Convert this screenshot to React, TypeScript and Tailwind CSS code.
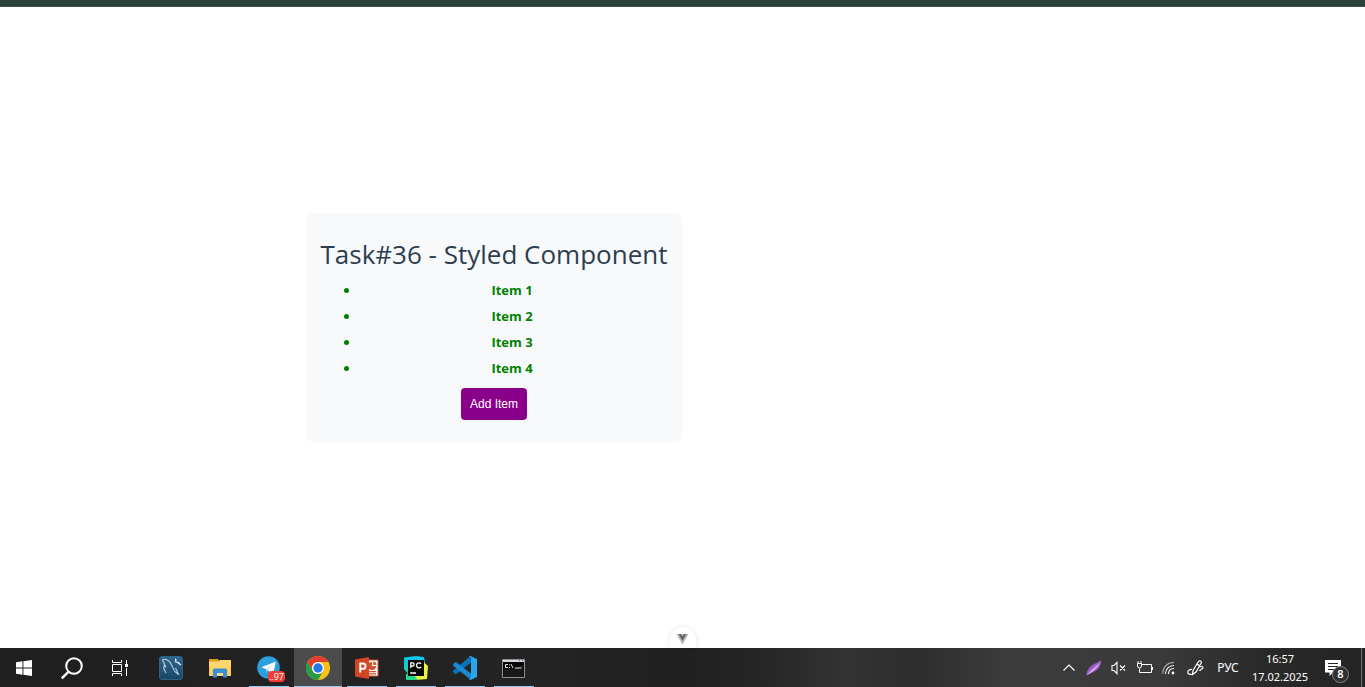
import { useState } from "react";
import type { ReactNode } from "react";

function StartIcon() {
  return (
    <svg width="16" height="16" viewBox="0 0 16 16" fill="#fff" aria-hidden="true">
      <path d="M0 2.2 6.5 1.3V7.5H0zM7.4 1.2 16 0v7.5H7.4zM0 8.4h6.5v6.3L0 13.8zM7.4 8.4H16V16l-8.6-1.2z" />
    </svg>
  );
}

function SearchIcon() {
  return (
    <svg width="24" height="24" viewBox="0 0 24 24" fill="none" stroke="#fff" aria-hidden="true">
      <circle cx="14" cy="10" r="7.8" strokeWidth="2" />
      <path d="M8.6 15.6 1.8 22.4" strokeWidth="2.4" />
    </svg>
  );
}

function TaskViewIcon() {
  return (
    <svg width="18" height="16" viewBox="0 0 18 16" fill="none" stroke="#fff" aria-hidden="true">
      <path d="M1.5 0v2.5h9V0M1.5 16v-2.5h9V16M1.5 4.5h9v7h-9zM15.500 0v4M15.500 8v8" />
      <path d="M14 4h3v3h-3z" fill="#fff" stroke="none" />
    </svg>
  );
}

function WorkbenchIcon() {
  return (
    <svg width="24" height="24" viewBox="0 0 24 24" fill="none" aria-hidden="true">
      <defs>
        <linearGradient id="wb" x1="0" y1="0" x2="0" y2="1">
          <stop offset="0" stopColor="#33658d" />
          <stop offset="1" stopColor="#174767" />
        </linearGradient>
      </defs>
      <rect x=".5" y=".5" width="23" height="23" rx="2.500" fill="url(#wb)" stroke="#2b6288" />
      <path
        d="M3.500 3.500c3.500-.8 6 .6 8 3.600 2 3 2.800 6.300 4.500 8.600l4 3M3.500 3.500l2 5-.8 4 2.300 4.500M5.500 8.500l1.500 3M16.500 12l3 6.500"
        stroke="#bcd0df"
        strokeWidth="1.100"
      />
      <path d="m16 2 1.500 1.500v2L19.500 6l3 2.800-1.200.8-3-2.600-2.300-.8z" fill="#dce7ef" />
    </svg>
  );
}

function ExplorerIcon() {
  return (
    <svg width="22" height="20" viewBox="0 0 22 20" aria-hidden="true">
      <path d="M0 1h9l1.500 2.500V7H0z" fill="#e09b11" />
      <path d="M0 3.500h9.500L11 2h11v16H0z" fill="#fdd76c" />
      <path d="M0 10h22v8H0z" fill="#f9cf5e" />
      <path d="M4 19.500V12a1.500 1.500 0 0 1 1.500-1.500h11A1.500 1.500 0 0 1 18 12v7.500h-4V15H8v4.500z" fill="#3a8fd8" />
      <path d="M8 15h6v3H8z" fill="#f3d88c" />
    </svg>
  );
}

function TelegramIcon() {
  return (
    <svg width="24" height="24" viewBox="0 0 24 24" aria-hidden="true">
      <circle cx="11.500" cy="11.500" r="11.300" fill="#2ba0da" />
      <path d="M4.500 11.300 17.600 6c.8-.3 1.200.1 1 .9L16.400 17c-.2.8-.7 1-1.300.6L9.200 13.300z" fill="#fff" />
      <path d="m9.200 13.300 5.700-4.200-4.500 5.100-.7 3z" fill="#b9d9eb" />
    </svg>
  );
}

function ChromeIcon() {
  return (
    <svg width="24" height="24" viewBox="0 0 24 24" aria-hidden="true">
      <circle cx="12" cy="12" r="12" fill="#fbc116" />
      <path d="M12 0A12 12 0 0 1 22.400 6H12a6 6 0 0 0-5.200 9L1.600 6A12 12 0 0 1 12 0z" fill="#e33b2e" />
      <path d="M1.600 6 6.800 15A6 6 0 0 0 17.200 15L12 24A12 12 0 0 1 1.600 6z" fill="#249c49" />
      <circle cx="12" cy="12" r="6" fill="#fff" />
      <circle cx="12" cy="12" r="4.700" fill="#2678e8" />
    </svg>
  );
}

function PowerPointIcon() {
  return (
    <svg width="24" height="22" viewBox="0 0 24 22" aria-hidden="true">
      <path d="M12 3h11v16H12z" fill="#fff" stroke="#d35230" />
      <path d="M17 5v4h4a4 4 0 1 1-4-4z" fill="#d35230" />
      <path d="M18.300 4.500A3.600 3.600 0 0 1 21.600 8h-3.300zM14 14h7v1.200h-7zM14 16.300h7v1.200h-7z" fill="#d35230" />
      <path d="M0 2.500 14 0v22L0 19.500z" fill="#d24625" />
      <path d="M5.300 15.500V6.500h2.600a2.500 2.500 0 0 1 0 5.300H5.300" fill="none" stroke="#fff" strokeWidth="1.900" />
    </svg>
  );
}

function PyCharmIcon() {
  return (
    <svg width="24" height="24" viewBox="0 0 24 24" aria-hidden="true">
      <defs>
        <linearGradient id="pc" x1="0" y1="0" x2="0" y2="1">
          <stop offset="0" stopColor="#07c3f2" />
          <stop offset=".55" stopColor="#15d0c0" />
          <stop offset="1" stopColor="#21d789" />
        </linearGradient>
      </defs>
      <path d="M0 1.500 12 0l8 1 1 6v12L2 24l1.500-7L0 13z" fill="url(#pc)" />
      <path d="m19.500 6 4.500 4-1 13-11 1-8-2 12-3z" fill="#e9f43c" />
      <path d="M2 18h7l5 6H2z" fill="#21d789" />
      <path d="M4 4h16v16H4z" fill="#080808" />
      <path d="M6.800 12V6.800h1.700a1.600 1.600 0 0 1 0 3.200H6.800M17 7.800a2.500 2.500 0 1 0 0 3.200M6.200 17h5.800" fill="none" stroke="#fff" strokeWidth="1.300" />
    </svg>
  );
}

function CodeIcon() {
  return (
    <svg width="24" height="24" viewBox="0 0 24 24" aria-hidden="true">
      <path d="m17.500 0 .5 6.500L3.300 18 2 18 0 16v-1.300z" fill="#0873b9" />
      <path d="M0 8.500 2 6.300l1.200-.1L18 17.500V24L0 9.500z" fill="#168bd4" />
      <path d="M17.500 0 24 3v18l-6.500 3-1.700-.7 2.200-1V1.700l-2.200-1z" fill="#2aa4ed" />
    </svg>
  );
}

function ConsoleIcon() {
  return (
    <svg width="24" height="19" viewBox="0 0 24 19" aria-hidden="true">
      <path d="M.5.500h22v18H.5z" fill="#050505" stroke="#929292" />
      <path d="M1 1h21v2H1z" fill="#d3d8df" />
      <path d="M17 1h1v1h-1zM20 1h1v1h-1z" fill="#4c6187" />
      <path d="M1.500 10c7 1 14-1 20-5v13h-20z" fill="#191919" />
      <path d="M6 5.500H3.500v3H6M7.500 5.500v1M7.500 8v1M9 5l2 4M13 9h6.500" fill="none" stroke="#e5e5e5" />
    </svg>
  );
}

function ChevronIcon() {
  return (
    <svg width="12" height="7" viewBox="0 0 12 7" fill="none" stroke="#fff" strokeWidth="1.200" aria-hidden="true">
      <path d="M.5 6.500 6 1l5.500 5.500" />
    </svg>
  );
}

function FeatherIcon() {
  return (
    <svg width="16" height="16" viewBox="0 0 16 16" aria-hidden="true">
      <path d="M.5 15.500c0-4.500 2-8 6-10.500 3-1.900 6-2.500 8.500-5 .3 4-1 7.500-4 10-3 2.500-6.500 3-10.500 5.500z" fill="#9a5cc4" />
      <path d="M.5 15.500C5 10 10 6.500 14 2.500 12 7.500 7 11.500.5 15.500z" fill="#e0b8f1" />
    </svg>
  );
}

function VolumeIcon() {
  return (
    <svg width="16" height="14" viewBox="0 0 16 14" fill="none" stroke="#fff" strokeWidth="1.100" aria-hidden="true">
      <path d="M1 4.500h2L6 1.300v11.400L3 9.500H1zM9 4.500l5 5M14 4.500l-5 5" />
    </svg>
  );
}

function BatteryIcon() {
  return (
    <svg width="17" height="14" viewBox="0 0 17 14" fill="none" stroke="#fff" aria-hidden="true">
      <path d="M6 3.500h9.500v8h-12V8M16.500 6v3M2 0v3M5 0v3M1.500 2.500h4v2.500L4.500 7h-2L1.500 5z" />
    </svg>
  );
}

function WifiIcon() {
  return (
    <svg width="14" height="14" viewBox="0 0 14 14" fill="none" stroke="#fff" strokeWidth="1.100" aria-hidden="true">
      <path d="M.8 12.500C.8 6 5.500 1.500 12 1.500" stroke="#b9b9b9" />
      <path d="M3.500 13c0-5 3.500-8.500 8.500-8.500M6.500 13c0-3.300 2.200-5.500 5.500-5.500" />
      <circle cx="11" cy="12" r="1.400" fill="#fff" stroke="none" />
    </svg>
  );
}

function PenIcon() {
  return (
    <svg width="17" height="16" viewBox="0 0 17 16" fill="none" stroke="#fff" strokeWidth="1.200" aria-hidden="true">
      <path d="M5.500 14.500 6 10.500l5.500-9c1-1.500 3.500-.2 2.700 1.500l-5.200 9zM10 4l3 2M5 9.500c-2-.3-4.300.8-4.300 2.700 0 2 2.300 2.500 4.800 1.800M12.500 7c2-1.200 3.500-.4 3.500.6 0 1.500-2.500 1.700-3.500 3.400" />
    </svg>
  );
}

function NotificationsIcon() {
  return (
    <svg width="16" height="16" viewBox="0 0 16 16" aria-hidden="true">
      <path d="M0 0h16v12.500h-8L4.500 16v-3.500H0z" fill="#fff" />
      <path d="M3 3.500h10M3 6.500h10M3 9.500h7" stroke="#252525" />
    </svg>
  );
}

function VueIcon() {
  return (
    <svg width="12" height="11" viewBox="0 0 12 11" aria-hidden="true">
      <path d="M0 0h12L6 10.500z" fill="#b4b4b4" />
      <path d="M2.200 0h2L6 2.600 7.800 0h2L6 6.800z" fill="#606060" />
    </svg>
  );
}

function TaskButton({ label, state = "idle", children }: { label: string; state?: "idle" | "open" | "active"; children: ReactNode }) {
  return (
    <button
      type="button"
      aria-label={label}
      className={`flex w-12 flex-col items-center ${state === "active" ? "bg-[#4b4b4b]" : ""}`}
    >
      <span className="flex flex-1 items-center pt-0.5">{children}</span>
      <span className={`h-px ${state === "active" ? "w-full bg-[#8ccbff]" : state === "open" ? "w-10 bg-[#8ccbff]" : ""}`} />
    </button>
  );
}

function TrayButton({ label, children }: { label: string; children: ReactNode }) {
  return (
    <button type="button" aria-label={label} className="flex w-6 items-center justify-center">
      {children}
    </button>
  );
}

function Taskbar() {
  return (
    <footer className="flex h-[39px] shrink-0 justify-between bg-linear-[90deg,#1f1f1f_0%,#242424_38%,#202020_50%,#262626_56%,#333333_62%,#2d2d2d_67%,#3c3c3c_74%,#3a3a3a_85%,#292929_93%,#242424_100%] text-white">
      <nav aria-label="Applications" className="flex">
        <div className="flex pr-[3px]">
          <TaskButton label="Start"><StartIcon /></TaskButton>
          <TaskButton label="Search"><SearchIcon /></TaskButton>
          <TaskButton label="Task view"><TaskViewIcon /></TaskButton>
        </div>
        <div className="flex gap-px">
          <TaskButton label="MySQL Workbench"><WorkbenchIcon /></TaskButton>
          <TaskButton label="File Explorer"><ExplorerIcon /></TaskButton>
          <TaskButton label="Telegram" state="open">
            <span className="relative">
              <TelegramIcon />
              <span className="absolute -right-1 -bottom-0.5 rounded-sm bg-[#f23c34] px-px font-['Open_Sans',sans-serif] text-[9px] leading-[11px]">..97</span>
            </span>
          </TaskButton>
          <TaskButton label="Chrome" state="active"><ChromeIcon /></TaskButton>
          <TaskButton label="PowerPoint" state="open"><PowerPointIcon /></TaskButton>
          <TaskButton label="PyCharm" state="open"><PyCharmIcon /></TaskButton>
          <TaskButton label="Visual Studio Code" state="open"><CodeIcon /></TaskButton>
          <TaskButton label="Command Prompt" state="open"><ConsoleIcon /></TaskButton>
        </div>
      </nav>
      <div className="flex text-xs">
        <div className="flex gap-px pr-0.5">
          <TrayButton label="Show hidden icons"><ChevronIcon /></TrayButton>
          <TrayButton label="Feather"><FeatherIcon /></TrayButton>
          <TrayButton label="Volume"><VolumeIcon /></TrayButton>
          <TrayButton label="Battery"><BatteryIcon /></TrayButton>
          <TrayButton label="Network"><WifiIcon /></TrayButton>
        </div>
        <TrayButton label="Pen"><PenIcon /></TrayButton>
        <button type="button" className="w-[42px]">РУС</button>
        <button type="button" className="w-[62px] text-[11px] leading-[18px]">
          <span className="block">16:57</span>
          <span className="block">17.02.2025</span>
        </button>
        <button type="button" aria-label="Notifications" className="flex w-[50px] items-center pl-[14px]">
          <span className="relative">
            <NotificationsIcon />
            <span className="absolute top-1.5 left-[7px] flex size-[17px] items-center justify-center rounded-full border border-[#858585] bg-[#303030] text-[11px] font-semibold">8</span>
          </span>
        </button>
        <div className="mr-[3px] w-px bg-[#707070]" />
      </div>
    </footer>
  );
}

export default function App() {
  const [count, setCount] = useState(4);
  const items = Array.from({ length: count }, (_, i) => i + 1);

  return (
    <div className="flex h-screen flex-col bg-white font-['Noto_Sans','Open_Sans',sans-serif]">
      <div className="h-[7px] shrink-0 border-b border-[#454f4b] bg-[#2a4238]" />
      <main className="relative grid min-h-0 flex-1 grid-cols-2 items-center">
        <section className="w-[377px] justify-self-end rounded-lg bg-[#f8f9fb] px-2 py-[22px] text-center">
          <h1 className="font-['Open_Sans',sans-serif] text-[26px] leading-[38px] whitespace-nowrap text-[#2c3e50]">Task#36 - Styled Component</h1>
          <ul className="mb-[7px] list-disc pt-1 pl-[46px] pr-2.5 font-['Open_Sans',sans-serif] text-[13px] leading-[26px] font-bold text-[#008000]">
            {items.map((n) => (
              <li key={n}>Item {n}</li>
            ))}
          </ul>
          <button
            type="button"
            onClick={() => setCount(count + 1)}
            className="h-8 rounded bg-[#8b008b] px-[9px] font-['Liberation_Sans',sans-serif] text-xs text-white"
          >
            Add Item
          </button>
        </section>
        <button
          type="button"
          aria-label="Toggle developer tools"
          className="absolute bottom-0 left-1/2 flex h-[21px] w-[27px] -translate-x-1/2 justify-center rounded-t-full bg-white pt-[7px] shadow-[0_0_4px_rgba(0,0,0,0.12)]"
        >
          <VueIcon />
        </button>
      </main>
      <Taskbar />
    </div>
  );
}
